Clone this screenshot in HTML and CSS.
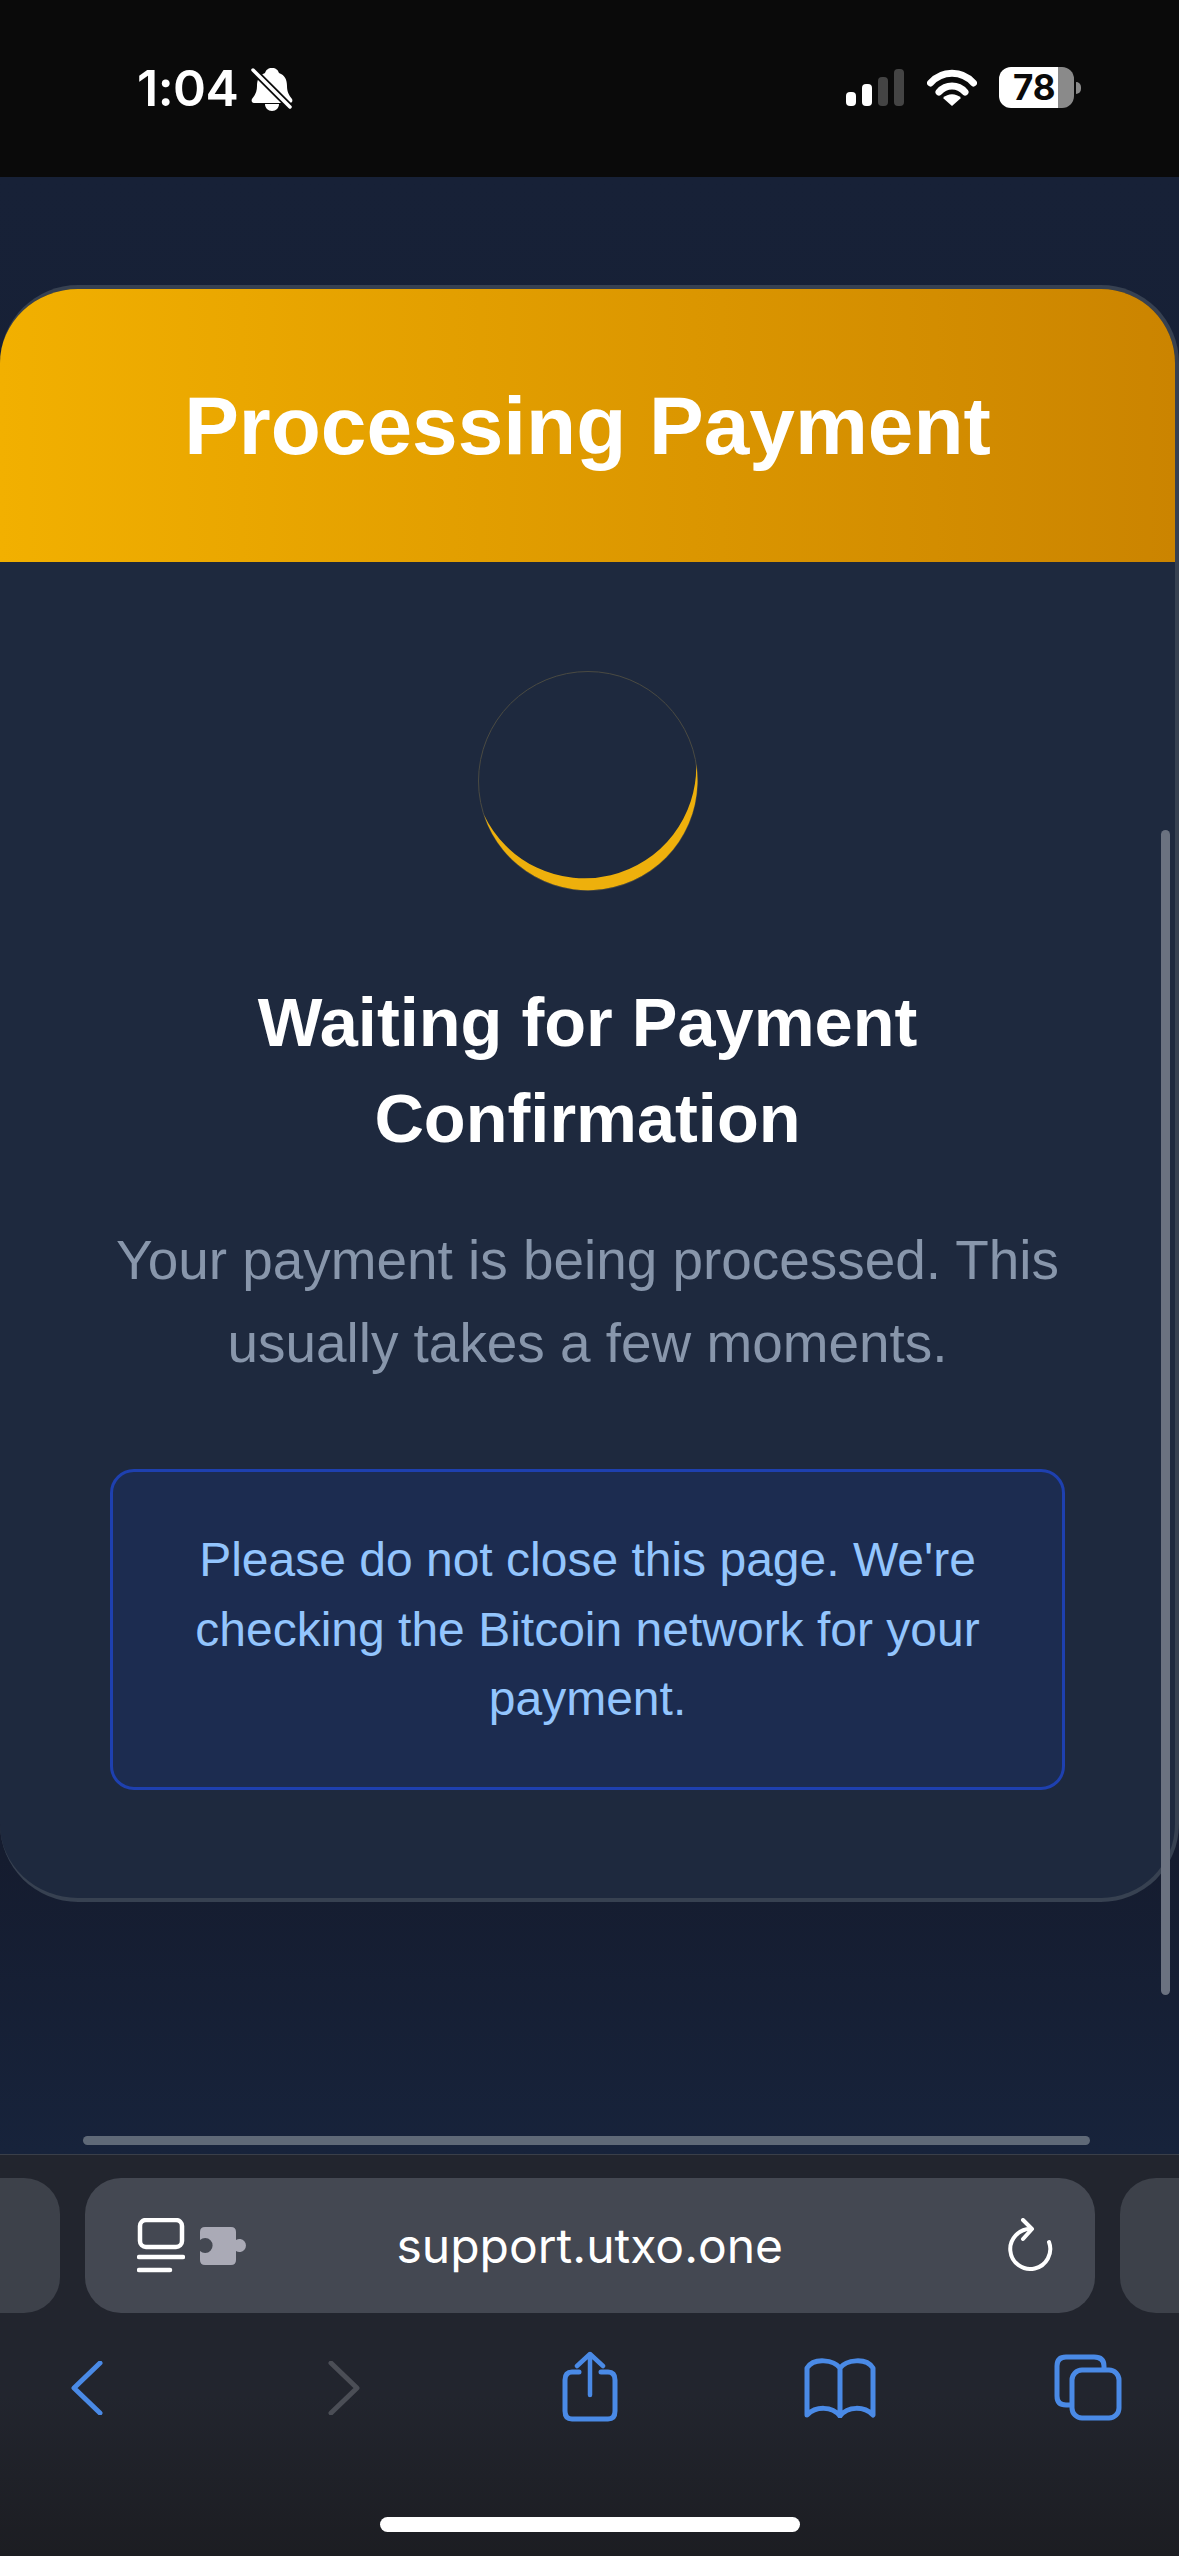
FILE: index.html
```html
<!DOCTYPE html>
<html lang="en">
<head>
    <meta charset="UTF-8">
    <meta name="viewport" content="width=device-width, initial-scale=1.0">
    <title>Processing Payment</title>
    <link rel="stylesheet" href="styles.css">
</head>
<body>

<div class="status-bar">
    <div class="status-left">
        <span class="clock">1:04</span>
        <svg class="bell" width="42" height="44" viewBox="0 0 42 44">
            <path d="M21 1c4 0 6 2 7 5 6 2 8 7 8 13 0 6 2 9 5 13 1 2 0 4-2 4H3c-2 0-3-2-2-4 3-4 5-7 5-13 0-6 2-11 8-13 1-3 3-5 7-5z" fill="#fff"/>
            <path d="M14 37h14c0 4-3 7-7 7s-7-3-7-7z" fill="#fff"/>
            <path d="M-2 -1L43 44" stroke="#0a0a0a" stroke-width="7"/>
            <path d="M2 3L39 40" stroke="#fff" stroke-width="3.500" stroke-linecap="round"/>
        </svg>
    </div>
    <div class="status-right">
        <div class="signal">
            <span class="bar bar1"></span>
            <span class="bar bar2"></span>
            <span class="bar bar3"></span>
            <span class="bar bar4"></span>
        </div>
        <svg class="wifi" width="50" height="37" viewBox="0 0 50 37">
            <path d="M3.500 14C15 1 35 1 46.500 14" fill="none" stroke="#fff" stroke-width="7" stroke-linecap="round"/>
            <path d="M12 23C19 15 31 15 38 23" fill="none" stroke="#fff" stroke-width="7" stroke-linecap="round"/>
            <path d="M25 37L16 29C21 24 29 24 34 29z" fill="#fff"/>
        </svg>
        <div class="battery">
            <div class="battery-body"><span class="battery-level">78</span></div>
            <span class="battery-nub"></span>
        </div>
    </div>
</div>

<div class="page">
    <div class="card">
        <div class="card-header">
            <h1>Processing Payment</h1>
        </div>
        <div class="card-body">
            <svg class="spinner" width="222" height="222" viewBox="0 0 222 222">
                <circle cx="111" cy="111" r="109.500" fill="none" stroke="#4a4a42" stroke-width="1"/>
                <path d="M219.200 94A109.500 109.500 0 0 1 7 145A111.600 111.600 0 0 0 219.200 94z" fill="#eeb00c"/>
            </svg>
            <h2>Waiting for Payment Confirmation</h2>
            <p class="lead">Your payment is being processed. This usually takes a few moments.</p>
            <div class="notice">Please do not close this page. We're checking the Bitcoin network for your payment.</div>
        </div>
    </div>
    <div class="scroll-v"></div>
    <div class="scroll-h"></div>
</div>

<div class="toolbar">
    <div class="tabs-row">
        <div class="tab-side tab-prev"></div>
        <div class="url-bar">
            <div class="url-left">
                <svg width="48" height="56" viewBox="0 0 48 56">
                    <rect x="3" y="2" width="42" height="27" rx="6" fill="none" stroke="#fff" stroke-width="4.500"/>
                    <path d="M2 39H46" stroke="#fff" stroke-width="4.500" stroke-linecap="round"/>
                    <path d="M2 52H33" stroke="#fff" stroke-width="4.500" stroke-linecap="round"/>
                </svg>
                <svg class="puzzle" width="48" height="40" viewBox="0 0 48 40">
                    <path d="M5 1H31Q36 1 36 6V14A6.500 6.500 0 1 1 36 25V34Q36 39 31 39H5Q0 39 0 34V25A7.500 7.500 0 1 0 0 14V6Q0 1 5 1z" fill="#aaaab6"/>
                </svg>
            </div>
            <span class="url-text">support.utxo.one</span>
            <svg class="reload" width="48" height="56" viewBox="0 0 48 56">
                <path d="M26 11A20 20 0 1 0 44 24" fill="none" stroke="#fff" stroke-width="4" stroke-linecap="round"/>
                <path d="M18 2L27 11L18 21" fill="none" stroke="#fff" stroke-width="4" stroke-linecap="round" stroke-linejoin="round"/>
            </svg>
        </div>
        <div class="tab-side tab-next"></div>
    </div>
    <div class="nav-row">
        <svg class="nav-back" width="32" height="54" viewBox="0 0 32 54">
            <path d="M29 2L3 27L29 52" fill="none" stroke="#4a8ae6" stroke-width="5" stroke-linecap="round" stroke-linejoin="round"/>
        </svg>
        <svg class="nav-forward" width="32" height="54" viewBox="0 0 32 54">
            <path d="M3 2L29 27L3 52" fill="none" stroke="#4b4e56" stroke-width="5" stroke-linecap="round" stroke-linejoin="round"/>
        </svg>
        <svg class="nav-share" width="56" height="71" viewBox="0 0 56 71">
            <path d="M17 21H10Q3 21 3 29V60Q3 68 10 68H46Q53 68 53 60V29Q53 21 46 21H39" fill="none" stroke="#4a8ae6" stroke-width="5" stroke-linecap="round"/>
            <path d="M28 44V3M15 15L28 3L41 15" fill="none" stroke="#4a8ae6" stroke-width="4.500" stroke-linecap="round" stroke-linejoin="round"/>
        </svg>
        <svg class="nav-book" width="72" height="60" viewBox="0 0 72 60">
            <path d="M36 10C30 2 10 -1 3 10V57C12 48 28 48 36 58C44 48 60 48 69 57V10C62 -1 42 2 36 10V58" fill="none" stroke="#4a8ae6" stroke-width="5" stroke-linecap="round" stroke-linejoin="round"/>
        </svg>
        <svg class="nav-tabs" width="68" height="67" viewBox="0 0 68 67">
            <path d="M50 15V12Q50 3 40 3H12Q3 3 3 12V42Q3 51 12 51H16" fill="none" stroke="#4a8ae6" stroke-width="5"/>
            <rect x="18" y="16" width="47" height="48" rx="10" fill="none" stroke="#4a8ae6" stroke-width="5"/>
        </svg>
    </div>
    <div class="home-bar"></div>
</div>

</body>
</html>
```

FILE: styles.css
```css
* {
    box-sizing: border-box;
}

body {
    font-family: 'Liberation Sans', Arial, sans-serif;
    background: #0a0a0a;
    color: #fff;
    margin: 0;
    width: 1179px;
    height: 2556px;
    display: flex;
    flex-direction: column;
    overflow: hidden;
}

/* status bar */
.status-bar {
    height: 177px;
    flex-shrink: 0;
    background-color: #0a0a0a;
    display: flex;
    justify-content: space-between;
    padding: 67px 98px 0 137px;
}

.status-left {
    display: flex;
    align-items: flex-start;
    gap: 13px;
}

.clock {
    font-family: Inter, sans-serif;
    font-size: 50px;
    font-weight: 600;
    line-height: 42px;
    letter-spacing: -0.5px;
}

.status-right {
    display: flex;
    align-items: flex-start;
}

.signal {
    display: flex;
    align-items: flex-end;
    gap: 6px;
    height: 37px;
    margin-top: 2px;
}

.bar {
    width: 10px;
    border-radius: 4px;
    background-color: #fff;
}

.bar1 { height: 14px; }
.bar2 { height: 22px; }
.bar3 { height: 29px; background-color: #444; }
.bar4 { height: 37px; background-color: #444; }

.wifi {
    margin: 2px 22px 0 23px;
}

.battery {
    display: flex;
    align-items: center;
    gap: 2px;
}

.battery-body {
    width: 75px;
    height: 41px;
    border-radius: 12px;
    overflow: hidden;
    background: linear-gradient(to right, #fff 59px, #8a8a8a 59px);
    color: #0a0a0a;
    font-family: Inter, sans-serif;
    font-size: 35px;
    font-weight: 700;
    line-height: 41px;
    padding-left: 14px;
}

.battery-nub {
    width: 5px;
    height: 12px;
    border-radius: 0 6px 6px 0;
    background-color: #8a8a8a;
}

/* page */
.page {
    flex: 1;
    position: relative;
    background: linear-gradient(to bottom, #172137 0%, #151c2f 85%, #17233b 100%);
    padding-top: 108px;
}

.card {
    height: 1617px;
    background-color: #1e293e;
    border: 4px solid #374151;
    border-left: none;
    border-radius: 78px;
    overflow: hidden;
}

.card-header {
    height: 273px;
    background: linear-gradient(to right, #f2b000, #cb8400);
    display: flex;
    align-items: center;
    justify-content: center;
}

h1 {
    margin: 0;
    font-size: 82px;
    font-weight: bold;
}

.card-body {
    padding: 108px 110px 0;
    text-align: center;
}

.spinner {
    display: block;
    margin: 0 auto;
}

h2 {
    margin: 83px 60px 0;
    font-size: 68.500px;
    font-weight: bold;
    line-height: 96px;
}

.lead {
    margin: 52px 0 0;
    font-size: 54.900px;
    line-height: 83px;
    color: #8896ab;
}

.notice {
    margin-top: 84px;
    padding: 53px 40px;
    background-color: #1c2c50;
    border: 3px solid #1e40af;
    border-radius: 24px;
    font-size: 48px;
    line-height: 69.500px;
    color: #93c5fd;
}

.scroll-v {
    position: absolute;
    top: 653px;
    right: 9px;
    width: 9px;
    height: 1165px;
    border-radius: 5px;
    background-color: #6b7280;
}

.scroll-h {
    position: absolute;
    left: 83px;
    bottom: 9px;
    width: 1007px;
    height: 9px;
    border-radius: 5px;
    background-color: #5f6977;
}

/* safari toolbar */
.toolbar {
    height: 402px;
    flex-shrink: 0;
    background: linear-gradient(to bottom, #22252e 0%, #22252e 60%, #1c1d22 100%);
    border-top: 1px solid #3a3f49;
    padding-top: 23px;
    position: relative;
}

.tabs-row {
    display: flex;
    gap: 25px;
}

.tab-side {
    flex: 1;
    height: 135px;
    background-color: #3d414a;
}

.tab-prev {
    border-radius: 0 36px 36px 0;
}

.tab-next {
    border-radius: 36px 0 0 36px;
}

.url-bar {
    width: 1010px;
    height: 135px;
    border-radius: 36px;
    background-color: #444852;
    display: flex;
    align-items: center;
    position: relative;
    padding: 0 42px 0 52px;
    justify-content: space-between;
}

.url-left {
    display: flex;
    align-items: center;
    gap: 15px;
}

.url-text {
    position: absolute;
    left: 312px;
    font-family: Inter, sans-serif;
    font-size: 48px;
    font-weight: 400;
}

.nav-row {
    display: flex;
    align-items: flex-start;
    padding-left: 71px;
    margin-top: 38px;
    height: 71px;
}

.nav-back { margin-top: 10px; }
.nav-forward { margin-top: 10px; margin-left: 225px; }
.nav-share { margin-left: 202px; }
.nav-book { margin-top: 7px; margin-left: 186px; }
.nav-tabs { margin-top: 3px; margin-left: 178px; }

.home-bar {
    position: absolute;
    left: 380px;
    bottom: 24px;
    width: 420px;
    height: 15px;
    border-radius: 8px;
    background-color: #fff;
}
```
